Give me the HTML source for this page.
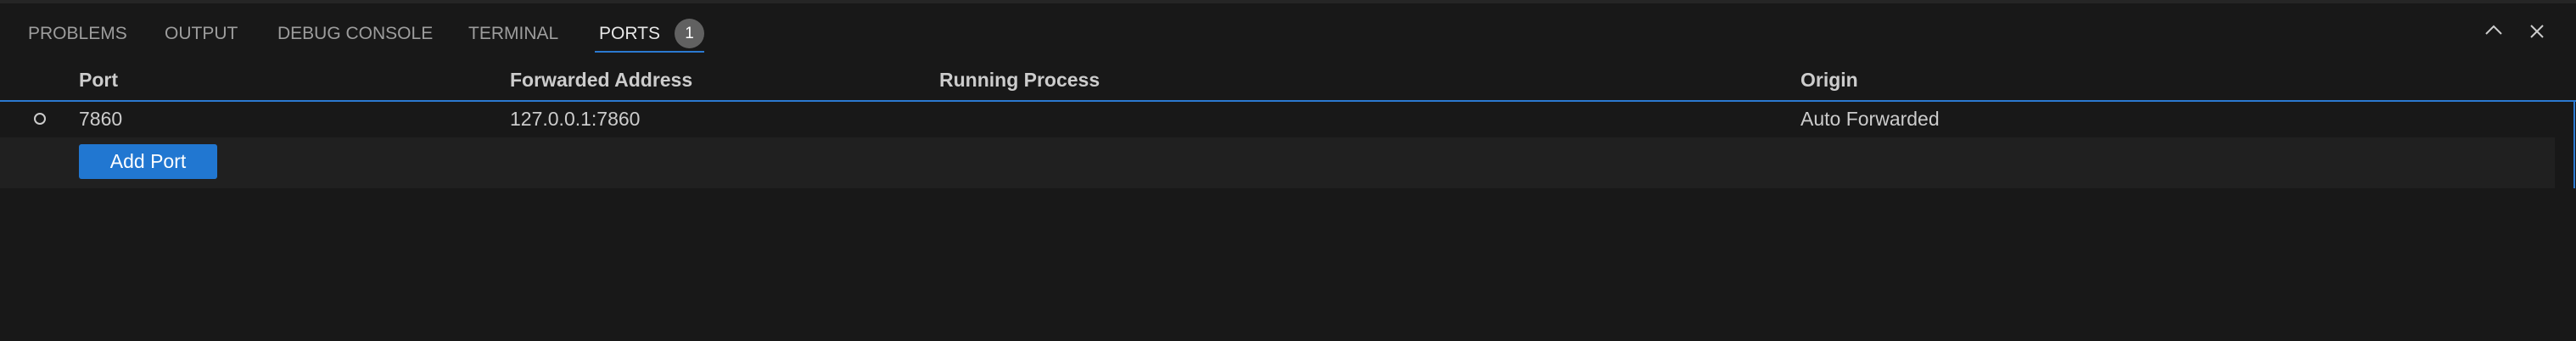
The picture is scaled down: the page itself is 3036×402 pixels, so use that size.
<!DOCTYPE html>
<html><head><style>
body{margin:0;width:3036px;height:402px;background:#181818;overflow:hidden;position:relative;font-family:"Liberation Sans",sans-serif;}
.a{position:absolute;white-space:nowrap;}
.tab{top:28px;font-size:21px;color:#9d9d9d;}
.h{top:81px;font-size:23px;font-weight:bold;color:#cccccc;}
.r{top:127px;font-size:23px;color:#cccccc;}
</style></head><body>
<div class="a" style="left:0;top:0;width:3036px;height:4px;background:#252525"></div>
<div class="a tab" style="left:33px">PROBLEMS</div>
<div class="a tab" style="left:194px">OUTPUT</div>
<div class="a tab" style="left:327px">DEBUG CONSOLE</div>
<div class="a tab" style="left:552px">TERMINAL</div>
<div class="a tab" style="left:706px;color:#e7e7e7">PORTS</div>
<div class="a" style="left:795px;top:22px;width:35px;height:35px;border-radius:50%;background:#616161;color:#fff;font-size:19px;text-align:center;line-height:35px">1</div>
<div class="a" style="left:701px;top:60px;width:129px;height:2px;background:#2b79d0"></div>
<svg class="a" style="left:2928px;top:28px" width="22" height="16"><path d="M2 12 L11 3 L20 12" stroke="#ccc" stroke-width="2" fill="none"/></svg>
<svg class="a" style="left:2980px;top:27px" width="20" height="20"><path d="M3 3 L17 17 M17 3 L3 17" stroke="#ccc" stroke-width="2" fill="none"/></svg>
<div class="a h" style="left:93px">Port</div>
<div class="a h" style="left:601px">Forwarded Address</div>
<div class="a h" style="left:1107px">Running Process</div>
<div class="a h" style="left:2122px">Origin</div>
<div class="a" style="left:0;top:118px;width:3036px;height:2px;background:#2b79d0"></div>
<div class="a" style="left:3033px;top:118px;width:2px;height:104px;background:#2b79d0"></div>
<div class="a" style="left:40px;top:133px;width:10px;height:10px;border:2.5px solid #ccc;border-radius:50%"></div>
<div class="a r" style="left:93px">7860</div>
<div class="a r" style="left:601px">127.0.0.1:7860</div>
<div class="a r" style="left:2122px">Auto Forwarded</div>
<div class="a" style="left:0;top:162px;width:3011px;height:60px;background:#202020"></div>
<div class="a" style="left:93px;top:170px;width:163px;height:41px;background:#2177d1;border-radius:3px;color:#fff;font-size:23px;text-align:center;line-height:41px">Add Port</div>
</body></html>
